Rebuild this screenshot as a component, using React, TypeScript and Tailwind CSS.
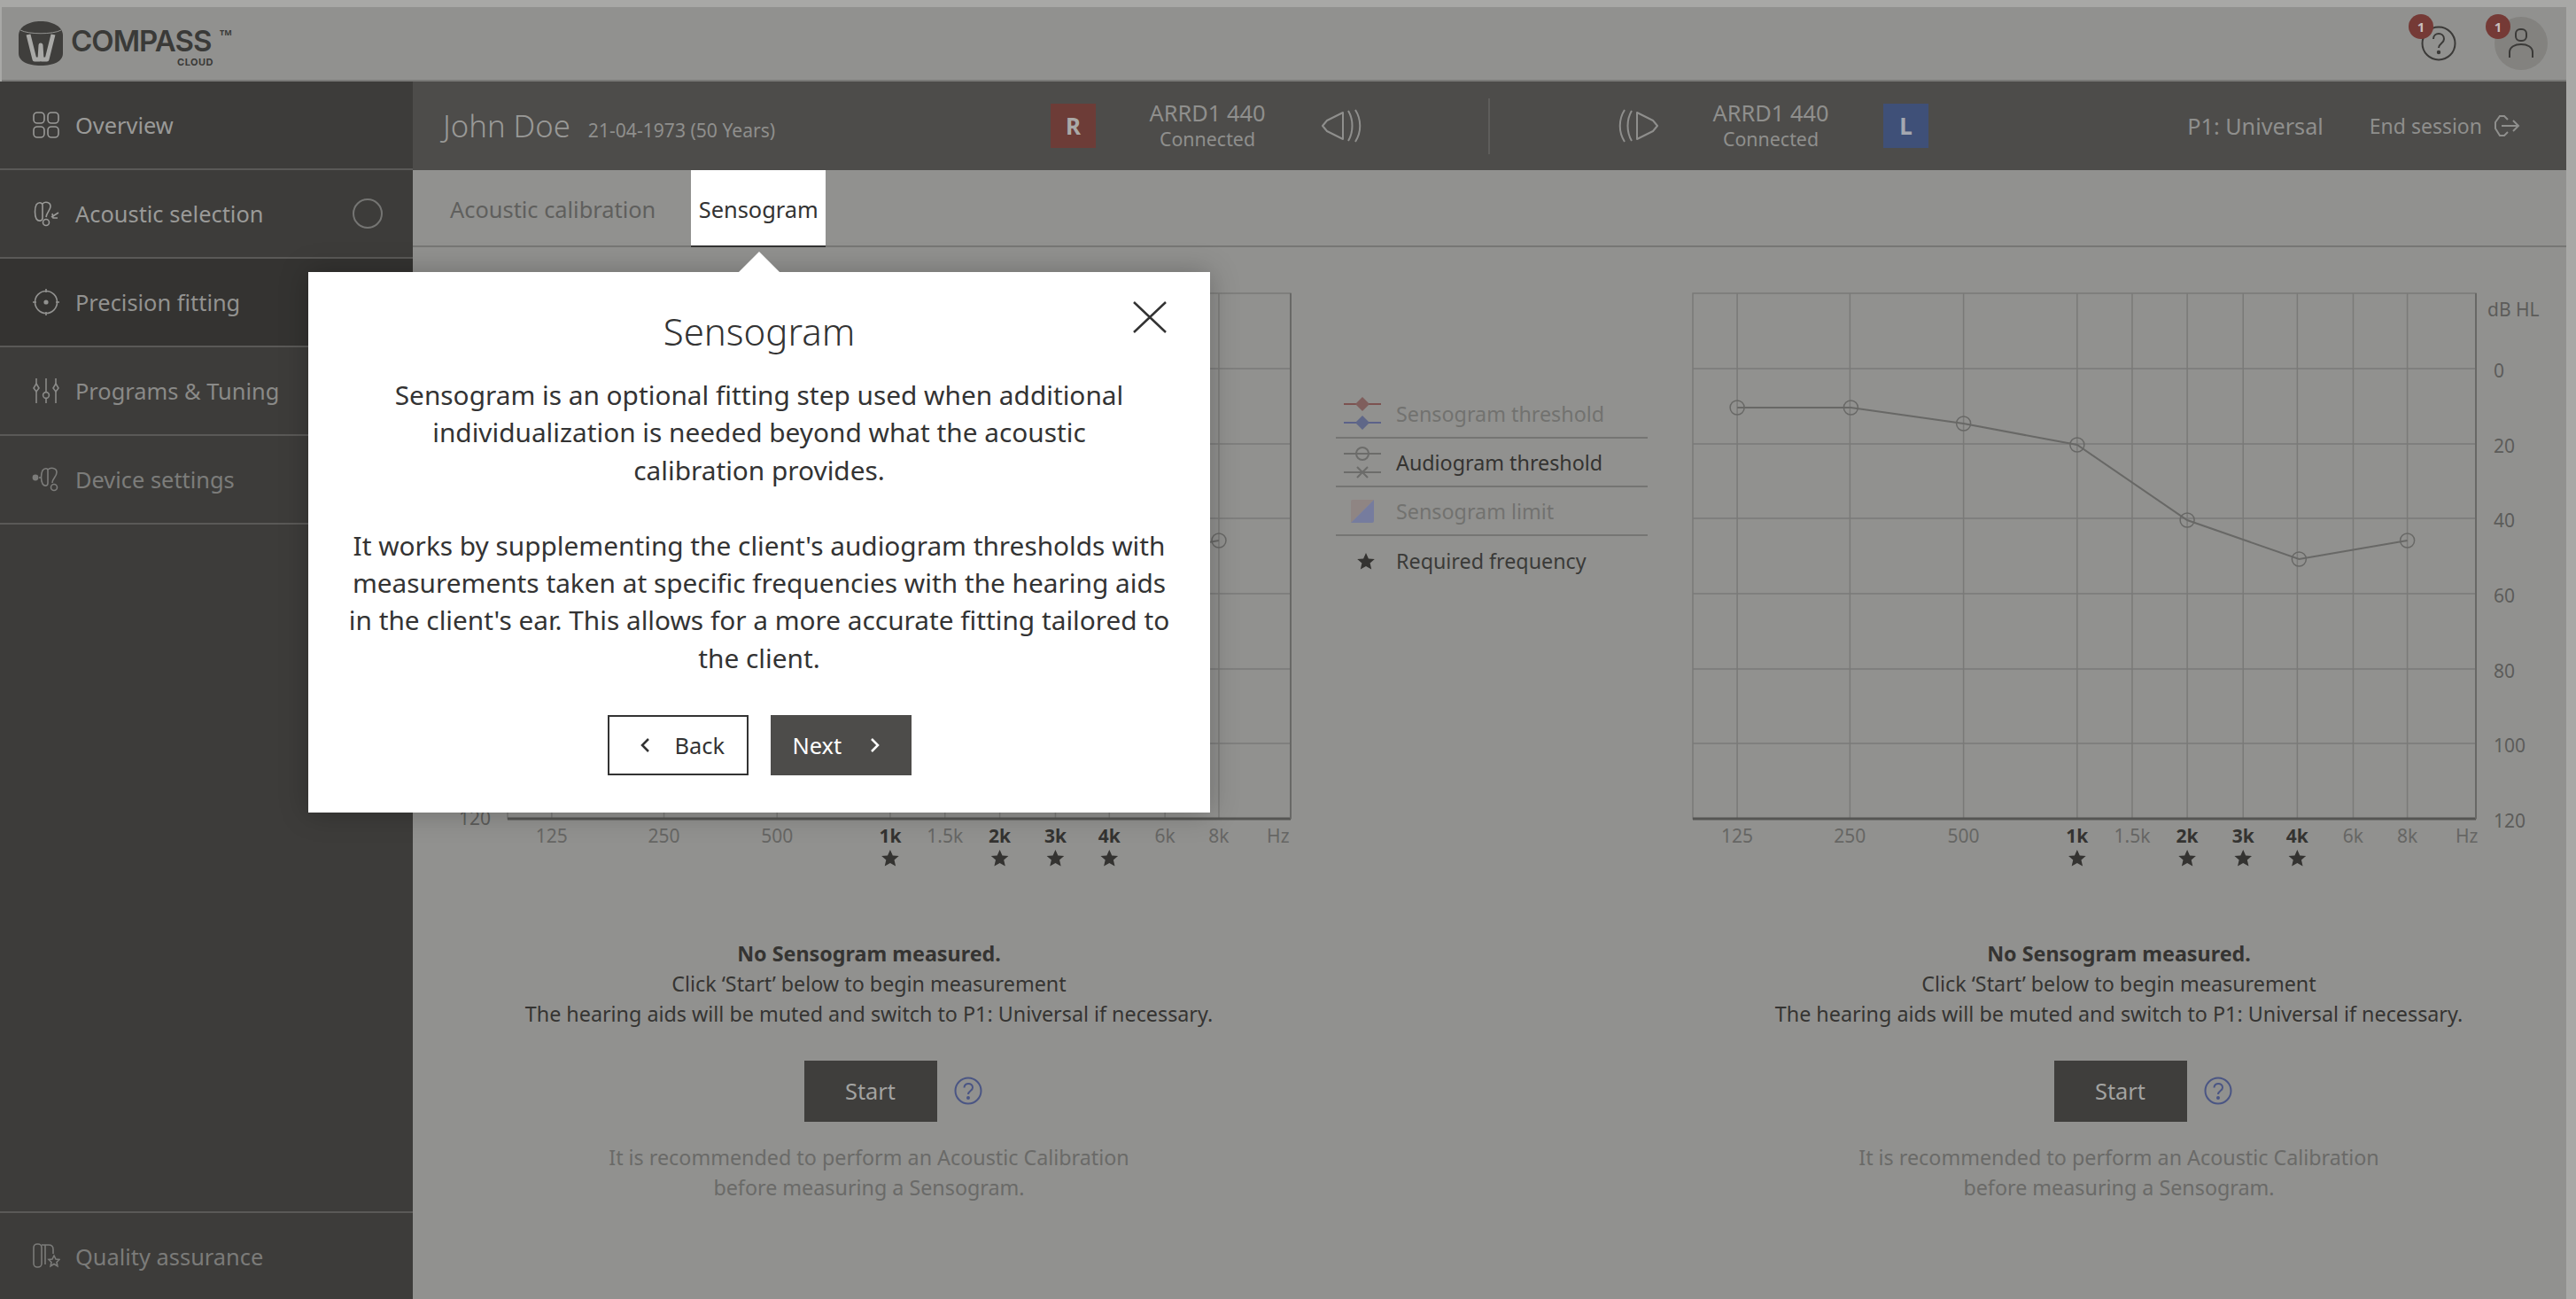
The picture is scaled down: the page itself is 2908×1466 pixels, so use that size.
import React from "react";

const TICKS = [
  { x: 50, t: "125" },
  { x: 177, t: "250" },
  { x: 305, t: "500" },
  { x: 433, t: "1k", b: true },
  { x: 495, t: "1.5k" },
  { x: 557, t: "2k", b: true },
  { x: 620, t: "3k", b: true },
  { x: 681, t: "4k", b: true },
  { x: 744, t: "6k" },
  { x: 805, t: "8k" },
];
const PTS = [
  [50, 129],
  [178, 129],
  [305, 147],
  [433, 171],
  [557, 256],
  [683, 300],
  [805, 279],
];
const LEVELS = [
  { y: 85, t: "0" },
  { y: 170, t: "20" },
  { y: 254, t: "40" },
  { y: 339, t: "60" },
  { y: 424, t: "80" },
  { y: 508, t: "100" },
  { y: 593, t: "120" },
];
const STAR = "M0 -10 L2.9 -3.4 L9.8 -3 L4.6 1.6 L6.2 8.6 L0 5 L-6.2 8.6 L-4.6 1.6 L-9.8 -3 L-2.9 -3.4 Z";

function Chart({ ox, labelsLeft, width, k }: { ox: number; labelsLeft: boolean; width: number; k: number }) {
  const W = 884;
  return (
    <svg width={width} height={660} className="shrink-0 block" fontFamily="'Noto Sans', sans-serif">
      <g transform={`translate(${ox} 1)`}>
        <rect x={0} y={0} width={W} height={593} fill="none" stroke="#7a7a78" strokeWidth={1.5} />
        {LEVELS.slice(0, 6).map((l) => (
          <line key={l.y} x1={0} x2={W} y1={l.y} y2={l.y} stroke="#7a7a78" strokeWidth={1.5} />
        ))}
        {TICKS.map((t) => (
          <line key={t.x} x1={t.x * k} x2={t.x * k} y1={0} y2={593} stroke="#7a7a78" strokeWidth={1.5} />
        ))}
        <line x1={0} x2={W} y1={593} y2={593} stroke="#555553" strokeWidth={3} />
        <line x1={W} x2={W} y1={0} y2={593} stroke="#686866" strokeWidth={2} />
        <polyline points={PTS.map((p) => `${p[0] * k},${p[1]}`).join(" ")} fill="none" stroke="#686866" strokeWidth={2} />
        {PTS.map((p) => (
          <circle key={p[0]} cx={p[0] * k} cy={p[1]} r={8} fill="none" stroke="#686866" strokeWidth={1.5} />
        ))}
        {labelsLeft ? (
          <text x={-19} y={600} fontSize={21} textAnchor="end" fill="#5c5c5a">
            120
          </text>
        ) : (
          <>
            {LEVELS.map((l) => (
              <text key={l.t} x={904} y={l.y + 10} fontSize={21} fill="#5c5c5a">
                {l.t}
              </text>
            ))}
            <text x={897} y={26} fontSize={21} fill="#5c5c5a">
              dB HL
            </text>
          </>
        )}
        {TICKS.map((t) => (
          <text
            key={t.t}
            x={t.x * k}
            y={620}
            fontSize={21}
            textAnchor="middle"
            fontWeight={t.b ? 700 : 400}
            fill={t.b ? "#343331" : "#666664"}
          >
            {t.t}
          </text>
        ))}
        <text x={872 * k} y={620} fontSize={21} textAnchor="middle" fill="#666664">
          Hz
        </text>
        {TICKS.filter((t) => t.b).map((t) => (
          <path key={t.x} d={STAR} transform={`translate(${t.x * k} 638)`} fill="#343331" />
        ))}
      </g>
    </svg>
  );
}

function SideIcon({ kind }: { kind: string }) {
  const common = {
    width: 32,
    height: 32,
    viewBox: "0 0 32 32",
    fill: "none",
    stroke: "currentColor",
    strokeWidth: 1.6,
    className: "shrink-0",
  };
  if (kind === "overview")
    return (
      <svg {...common}>
        <rect x="2" y="2" width="12" height="12" rx="4" />
        <rect x="18" y="2" width="12" height="12" rx="4" />
        <rect x="2" y="18" width="12" height="12" rx="4" />
        <rect x="18" y="18" width="12" height="12" rx="4" />
      </svg>
    );
  if (kind === "acoustic")
    return (
      <svg {...common}>
        <path d="M5 6c2-3 6-3 7 0v15c0 4-5 4-7 1-2-4-2-12 0-16z" />
        <path d="M12 5c3-3 9-2 9 3 0 4-4 6-5 12" />
        <circle cx="16" cy="26" r="3.5" />
        <path d="M22 20l8-5M23 16l1 5 5 0" />
      </svg>
    );
  if (kind === "precision")
    return (
      <svg {...common}>
        <circle cx="16" cy="16" r="12.5" />
        <circle cx="16" cy="16" r="1.8" fill="currentColor" />
        <path d="M16 1v4M16 27v4M1 16h4M27 16h4" />
      </svg>
    );
  if (kind === "programs")
    return (
      <svg {...common}>
        <path d="M5 2v8M5 16v14M16 2v16M16 24v6M27 2v8M27 16v14" />
        <path d="M5 8l3 5-3 4-3-4zM27 8l3 5-3 4-3-4z" />
        <circle cx="16" cy="21" r="3.4" />
      </svg>
    );
  if (kind === "device")
    return (
      <svg {...common}>
        <circle cx="4" cy="14" r="2.6" fill="currentColor" />
        <path d="M8 14h3" />
        <path d="M12 6c2-3 6-3 6 0v14c0 4-4 4-6 1-2-4-2-11 0-15z" />
        <path d="M18 5c3-3 10-2 10 3 0 5-5 7-5 12" />
        <circle cx="25" cy="25" r="3.5" />
      </svg>
    );
  return (
    <svg {...common}>
      <rect x="2" y="2" width="9" height="26" rx="4" />
      <path d="M11 3h8c3 0 5 2 5 5v5" />
      <path d="M15 3v22" />
      <path d="M25 15l2 4 4 .4-3 3 .9 4.4-3.900-2.300-3.900 2.300.9-4.400-3-3 4-.4z" />
    </svg>
  );
}

function NavItem({
  icon,
  label,
  color,
  active,
  circle,
}: {
  icon: string;
  label: string;
  color: string;
  active?: boolean;
  circle?: boolean;
}) {
  return (
    <div
      className={`h-[100px] flex items-center pl-[36px] pr-[34px] gap-[17px] border-b-2 border-[#5a5957] ${
        active ? "bg-[#343331]" : ""
      } ${color}`}
    >
      <SideIcon kind={icon} />
      <span className="text-[25.400px] leading-[32px]">{label}</span>
      {circle && <span className="ml-auto w-[34px] h-[34px] rounded-full border-2 border-[#757573]" />}
    </div>
  );
}

function Ear({ flip }: { flip?: boolean }) {
  return (
    <svg
      width="47"
      height="38"
      viewBox="0 0 47 38"
      fill="none"
      stroke="#8f8f8d"
      strokeWidth="2"
      className={`shrink-0 ${flip ? "-scale-x-100" : ""}`}
    >
      <path d="M1 19 L6 13 L24 4 V34 L6 25 Z" strokeLinejoin="round" />
      <path d="M30 2 C36 12 36 26 30 36" />
      <path d="M38 1 C45 12 45 26 38 37" />
    </svg>
  );
}

function Device({ w }: { w: string }) {
  return (
    <div className={`${w} shrink-0 text-center text-[#8f8f8d]`}>
      <div className="text-[25.400px] leading-[30px]">ARRD1 440</div>
      <div className="text-[21.400px] leading-[30px]">Connected</div>
    </div>
  );
}

function Badge({ left }: { left: string }) {
  return (
    <span className={`absolute w-[28px] h-[28px] ${left} -top-[3px] rounded-full bg-[#753a36] text-[#c9c0bd] text-[15px] leading-[28px] font-bold text-center`}>
      1
    </span>
  );
}

function LegendRow({ children, label, color, last }: { children: React.ReactNode; label: string; color: string; last?: boolean }) {
  return (
    <div className={`h-[55px] flex items-center ${last ? "" : "border-b-2 border-[#757573]"}`}>
      <svg width="68" height="54" className="shrink-0">
        {children}
      </svg>
      <span className={`text-[23.300px] leading-[32px] ${color}`}>{label}</span>
    </div>
  );
}

function Instructions() {
  return (
    <div className="w-[800px] flex flex-col items-center text-center">
      <div className="text-[23.300px] leading-[34px] text-[#353432]">
        <div className="font-bold">No Sensogram measured.</div>
        <div>Click ‘Start’ below to begin measurement</div>
        <div>The hearing aids will be muted and switch to P1: Universal if necessary.</div>
      </div>
      <div className="relative mt-[36px] ml-[3px]">
        <button className="block w-[150px] h-[69px] bg-[#3f3e3c] text-[#a3a3a1] text-[25.400px]">Start</button>
        <svg
          width="32"
          height="32"
          viewBox="0 0 32 32"
          fill="none"
          stroke="#4a5584"
          strokeWidth="2"
          className="absolute left-full top-[18px] ml-[19px]"
        >
          <circle cx="16" cy="16" r="14.500" />
          <path d="M11.500 12.500c0-6 9.500-6 9.500 0 0 3.500-5 3.500-5 7.500" />
          <circle cx="16" cy="24" r="1" fill="#4a5584" />
        </svg>
      </div>
      <div className="mt-[23px] text-[23.300px] leading-[34px] text-[#6a6a68]">
        It is recommended to perform an Acoustic Calibration
        <br />
        before measuring a Sensogram.
      </div>
    </div>
  );
}

export default function App() {
  return (
    <div className="relative w-[2908px] h-[1466px] overflow-hidden bg-[#a8a8a6] pt-[8px] pr-[11px] font-['Noto_Sans',sans-serif] flex flex-col">
      {/* App header */}
      <header className="h-[84px] shrink-0 bg-[#91918f] border-b-2 border-[#7a7a78] ml-[2px] flex items-center pl-[19px] pr-[21px]">
        <svg width="50" height="50" viewBox="0 0 50 50" className="shrink-0">
          <path d="M0 16C0 6 12 0 25 0s25 6 25 16v20c0 9-10 14-25 14S0 45 0 36z" fill="#3f3e3c" />
          <path d="M2 10c9 5 37 5 46 0" stroke="#91918f" strokeWidth="1" fill="none" />
          <path d="M11 15l7 28h6l1-16 1 16h6l7-28" fill="none" stroke="#a9a9a7" strokeWidth="5" strokeLinejoin="round" />
        </svg>
        <div className="relative ml-[9px] w-[185px] h-[50px] text-[#3a3a38]">
          <div className="w-[166px] text-[33px] leading-[28px] font-['Inter',sans-serif] font-semibold tracking-[-1px] mt-[8px] whitespace-nowrap">COMPASS</div>
          <div className="absolute left-[120px] top-[41px] text-[11px] leading-[10px] font-bold font-['Inter',sans-serif] tracking-[0.5px]">CLOUD</div>
          <div className="absolute left-[168px] top-[8px] text-[9px] leading-[10px] font-bold">TM</div>
        </div>
        <div className="ml-auto flex items-center gap-[43px]">
          <div className="relative w-[54px] h-[60px] flex items-center justify-end">
            <svg width="40" height="40" viewBox="0 0 40 40" fill="none" stroke="#3b3a38" strokeWidth="2">
              <circle cx="20" cy="20" r="18.500" />
              <path d="M14 15c0-8 12-8 12 0 0 5-6 5-6 10" />
              <circle cx="20" cy="30" r="1.200" fill="#3b3a38" />
            </svg>
            <Badge left="left-0" />
          </div>
          <div className="relative w-[60px] h-[60px] rounded-full bg-[#83827f] flex items-center justify-center">
            <svg width="28" height="34" viewBox="0 0 28 34" fill="none" stroke="#3b3a38" strokeWidth="2">
              <rect x="8" y="1" width="12" height="13" rx="5" />
              <path d="M1 33v-6c0-6 6-9 13-9s13 3 13 9v6" />
            </svg>
            <Badge left="-left-[10px]" />
          </div>
        </div>
      </header>

      <div className="flex-1 flex min-h-0">
        {/* Sidebar */}
        <aside className="w-[466px] shrink-0 bg-[#3d3c3a] flex flex-col">
          <NavItem icon="overview" label="Overview" color="text-[#9a9a98]" />
          <NavItem icon="acoustic" label="Acoustic selection" color="text-[#9a9a98]" circle />
          <NavItem icon="precision" label="Precision fitting" color="text-[#929290]" active />
          <NavItem icon="programs" label="Programs & Tuning" color="text-[#8a8a88]" />
          <NavItem icon="device" label="Device settings" color="text-[#7c7c7a]" />
          <div className="mt-auto h-[99px] flex items-center pl-[36px] gap-[17px] border-t-2 border-[#5a5957] text-[#7b7b79]">
            <SideIcon kind="quality" />
            <span className="text-[25.400px] leading-[32px]">Quality assurance</span>
          </div>
        </aside>

        <main className="flex-1 min-w-0 bg-[#91918f] flex flex-col">
          {/* Patient bar */}
          <div className="h-[100px] shrink-0 bg-[#4d4c4a] flex items-center">
            <div className="w-[720px] shrink-0 pl-[34px] flex items-baseline gap-[20px] text-[#999997]">
              <span className="text-[34.700px] leading-[40px] font-light">John Doe</span>
              <span className="text-[21.100px] leading-[28px] text-[#8f8f8d]">21-04-1973 (50 Years)</span>
            </div>
            <div className="w-[51px] h-[50px] shrink-0 bg-[#6d3c37] text-[#aaa9a7] font-bold text-[26px] flex items-center justify-center">R</div>
            <Device w="w-[252px]" />
            <div className="ml-[3px]"><Ear /></div>
            <div className="ml-[141px] w-[2px] h-[63px] bg-[#5e5d5b] shrink-0" />
            <div className="ml-[143px]"><Ear flip /></div>
            <Device w="w-[254px]" />
            <div className="w-[51px] h-[50px] shrink-0 bg-[#3f5078] text-[#a5a8b0] font-bold text-[26px] flex items-center justify-center">L</div>
            <div className="ml-auto pr-[52px] flex items-center text-[#8f8f8d]">
              <span className="text-[25.200px] leading-[32px]">P1: Universal</span>
              <span className="ml-[52px] text-[23px] leading-[32px]">End session</span>
              <svg width="30" height="26" viewBox="0 0 30 26" fill="none" stroke="#8f8f8d" strokeWidth="2" className="ml-[13px]">
                <path d="M16 6l-4-4H7L2 9v7l5 8h5l4-4" />
                <path d="M9 13h19M22 7l6 6-6 6" />
              </svg>
            </div>
          </div>

          {/* Tabs */}
          <div className="h-[87px] shrink-0 border-b-2 border-[#777775] flex items-stretch pl-[42px] gap-[40px]">
            <div className="flex items-center pt-[4px] text-[25.400px] text-[#5f5f5d]">Acoustic calibration</div>
            <div className="w-[152px] bg-white border-b-2 border-[#333] -mb-[2px] flex items-center justify-center pt-[4px] text-[25.400px] text-[#333]">
              Sensogram
            </div>
          </div>

          {/* Charts */}
          <div className="flex pl-[44px] pt-[51px]">
            <Chart ox={63} labelsLeft width={950} k={0.9975} />
            <div className="ml-[48px] w-[352px] shrink-0 mt-[110px]">
              <LegendRow label="Sensogram threshold" color="text-[#72726f]">
                <line x1="9" x2="51" y1="16" y2="16" stroke="#7c5250" strokeWidth="2" />
                <path d="M30 8l8 8-8 8-8-8z" fill="#7f5e5c" />
                <line x1="9" x2="51" y1="37" y2="37" stroke="#5c628a" strokeWidth="2" />
                <path d="M30 29l8 8-8 8-8-8z" fill="#5f6788" />
              </LegendRow>
              <LegendRow label="Audiogram threshold" color="text-[#343331]">
                <line x1="9" x2="51" y1="17" y2="17" stroke="#6c6c6a" strokeWidth="2" />
                <circle cx="30" cy="17" r="7" fill="none" stroke="#6c6c6a" strokeWidth="2" />
                <line x1="9" x2="51" y1="38" y2="38" stroke="#6c6c6a" strokeWidth="2" />
                <path d="M24 32l12 12M36 32L24 44" stroke="#6c6c6a" strokeWidth="2" />
              </LegendRow>
              <LegendRow label="Sensogram limit" color="text-[#72726f]">
                <path d="M19 14h24L17 40V16a2 2 0 0 1 2-2z" fill="#8f8583" />
                <path d="M43 14v24a2 2 0 0 1-2 2H17z" fill="#767c9e" />
              </LegendRow>
              <LegendRow label="Required frequency" color="text-[#3a3a38]" last>
                <path d={STAR} transform="translate(34 28)" fill="#343331" />
              </LegendRow>
            </div>
            <div className="ml-[50px]">
              <Chart ox={1} labelsLeft={false} width={970} k={1.002} />
            </div>
          </div>

          {/* Instructions */}
          <div className="flex mt-[69px] pl-[115px] gap-[611px]">
            <Instructions />
            <Instructions />
          </div>
        </main>
      </div>

      {/* Onboarding popover */}
      <div className="absolute left-[348px] top-[307px] w-[1018px] h-[610px] bg-white shadow-[0_0_30px_rgba(0,0,0,0.25)] flex flex-col items-center pt-[42px] text-[#333]">
        <div className="absolute left-[486px] -top-[23px] w-0 h-0 border-x-[23px] border-x-transparent border-b-[23px] border-b-white" />
        <svg width="38" height="36" viewBox="0 0 38 36" fill="none" stroke="#333" strokeWidth="2.500" className="absolute left-[931px] top-[33px]">
          <path d="M1 1l36 34M37 1L1 35" />
        </svg>
        <div className="text-[42px] leading-[50px] font-light">Sensogram</div>
        <div className="mt-[26px] text-[29.800px] leading-[42.400px] text-center whitespace-nowrap">
          Sensogram is an optional fitting step used when additional
          <br />
          individualization is needed beyond what the acoustic
          <br />
          calibration provides.
          <br />
          <br />
          It works by supplementing the client's audiogram thresholds with
          <br />
          measurements taken at specific frequencies with the hearing aids
          <br />
          in the client's ear. This allows for a more accurate fitting tailored to
          <br />
          the client.
        </div>
        <div className="mt-[43px] flex gap-[25px]">
          <button className="w-[159px] h-[68px] border-2 border-[#333] flex items-center pl-[34px] gap-[28px] text-[25.400px] text-[#333]">
            <svg width="12" height="18" viewBox="0 0 12 18" fill="none" stroke="#333" strokeWidth="2.500">
              <path d="M10 2L3 9l7 7" />
            </svg>
            Back
          </button>
          <button className="w-[159px] h-[68px] bg-[#4d4c4a] flex items-center pl-[25px] gap-[32px] text-[25.400px] text-white">
            Next
            <svg width="12" height="18" viewBox="0 0 12 18" fill="none" stroke="#fff" strokeWidth="2.500">
              <path d="M2 2l7 7-7 7" />
            </svg>
          </button>
        </div>
      </div>
    </div>
  );
}
